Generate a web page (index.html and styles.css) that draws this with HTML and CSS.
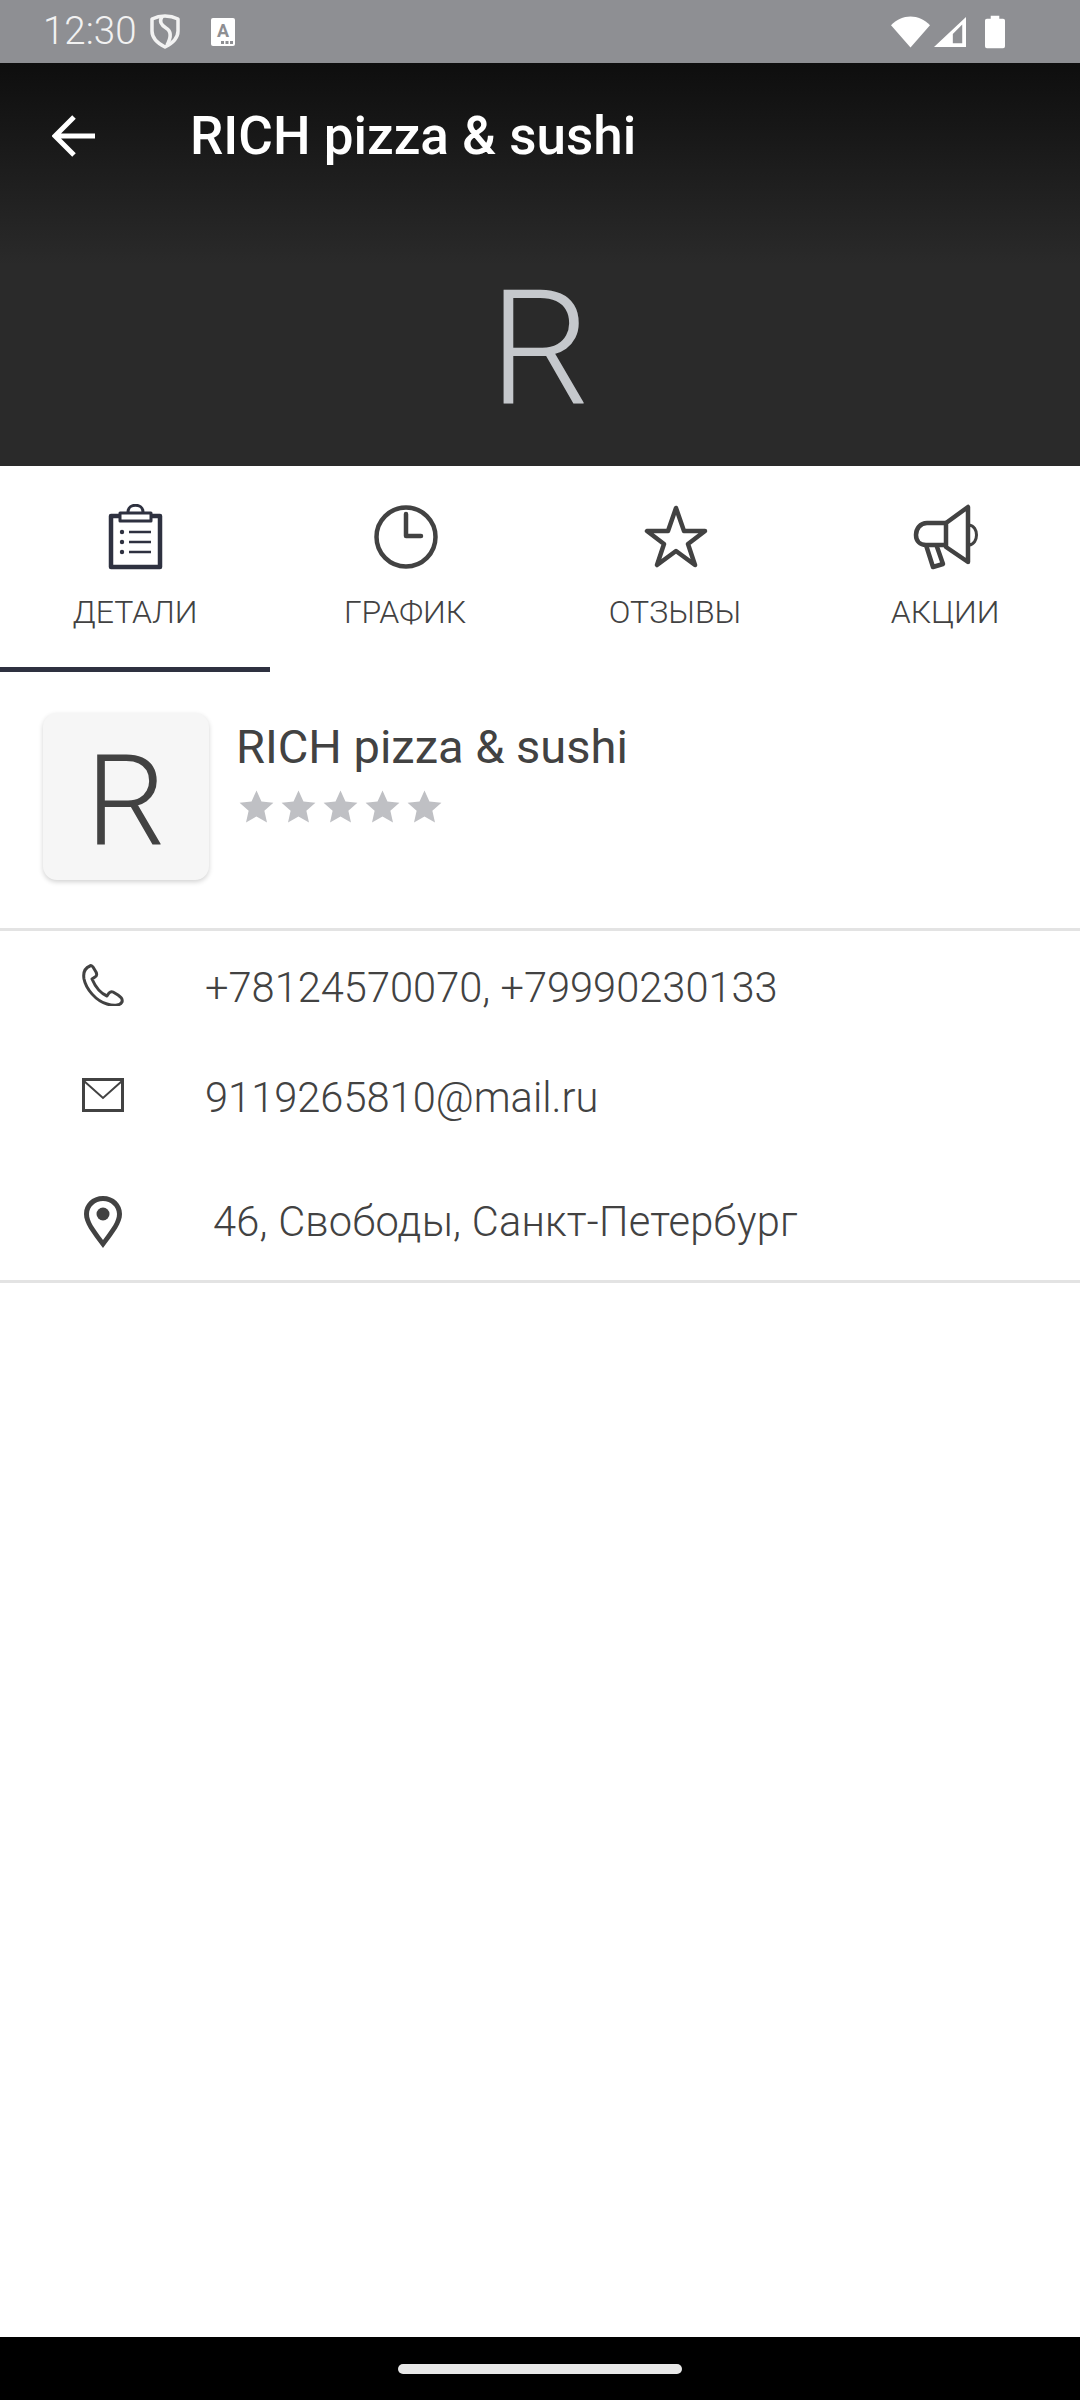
FILE: index.html
```html
<!doctype html>
<html lang="ru">
<head>
<meta charset="utf-8">
<meta name="viewport" content="width=device-width,initial-scale=1">
<title>RICH pizza &amp; sushi</title>
<link rel="stylesheet" href="styles.css">
</head>
<body>

<div class="status">
  <span class="time">12:30</span>
  <svg class="st-shield" viewBox="0 0 30 35"><path d="M15 2c4 0 9 1 13 3v12c0 7-5 12-13 16C7 29 2 24 2 17V5c4-2 9-3 13-3z" fill="none" stroke="#f2f2f2" stroke-width="3.500" stroke-linejoin="round"/><path d="M12 3c-3 4-1 8 4 11 5 3 6 8 1 17" fill="none" stroke="#f2f2f2" stroke-width="3.500"/></svg>
  <div class="st-a"><span>A</span><svg viewBox="0 0 12 3"><path d="M0 0h3v3H0zM4.500 0h3v3h-3zM9 0h3v3H9z" fill="#8e8f93"/></svg></div>
  <div class="st-right">
    <svg class="st-wifi" viewBox="0 0 40 32"><path d="M0 9C11-3 29-3 40 9L20 32z" fill="#fff"/></svg>
    <svg class="st-signal" viewBox="0 0 34 32"><path fill-rule="evenodd" d="M34 0v32H0zM30 8L20 18v10h10z" fill="#fff"/></svg>
    <svg class="st-batt" viewBox="0 0 21 34"><path d="M6 0h9v3h4a2 2 0 0 1 2 2v27a2 2 0 0 1-2 2H2a2 2 0 0 1-2-2V5a2 2 0 0 1 2-2h4z" fill="#fff"/></svg>
  </div>
</div>

<header class="hero">
  <div class="topbar">
    <svg class="back" viewBox="0 0 44 42"><path d="M43 21H4M22 2L3 21l19 19" fill="none" stroke="#fff" stroke-width="5"/></svg>
    <h1>RICH pizza &amp; sushi</h1>
  </div>
  <div class="hero-letter">R</div>
</header>

<nav class="tabs">
  <div class="tab active">
    <svg viewBox="0 0 68 68"><g fill="none" stroke="#2e3140" stroke-linejoin="round"><rect x="10" y="12" width="49" height="51" stroke-width="4.500"/><rect x="19" y="9" width="31" height="8" fill="#fff" stroke-width="3"/><path d="M27 8c0-9 15-9 15 0" stroke-width="3"/><path d="M28 28h22M28 38h22M28 48h22" stroke-width="2.600"/></g><g fill="#2e3140"><circle cx="21" cy="28" r="2.200"/><circle cx="21" cy="38" r="2.200"/><circle cx="21" cy="48" r="2.200"/></g></svg>
    <span>ДЕТАЛИ</span>
  </div>
  <div class="tab">
    <svg viewBox="0 0 68 68"><circle cx="35" cy="33" r="29.500" fill="none" stroke="#424242" stroke-width="4.500"/><path d="M35 10v22h15" fill="none" stroke="#424242" stroke-width="4.500" stroke-linecap="round" stroke-linejoin="round"/></svg>
    <span>ГРАФИК</span>
  </div>
  <div class="tab">
    <svg viewBox="0 0 68 68"><path d="M35 4l8 23h21L47 40l7 21-19-14-19 14 7-21L6 27h21z" fill="none" stroke="#424242" stroke-width="4.500" stroke-linejoin="round"/></svg>
    <span>ОТЗЫВЫ</span>
  </div>
  <div class="tab">
    <svg viewBox="0 0 68 68"><g fill="none" stroke="#424242" stroke-width="4.500" stroke-linejoin="round"><path d="M35 19L57 3v55L35 43z"/><path d="M35 19H16C9 19 5 25 5 31s4 10 10 10h20"/><path d="M15 41l7 22 10-3-7-20"/><path d="M58 21c10 1 10 19 0 20" stroke-width="3"/></g></svg>
    <span>АКЦИИ</span>
  </div>
</nav>

<main class="content">
  <section class="info">
    <div class="logo">R</div>
    <div class="info-text">
      <h2>RICH pizza &amp; sushi</h2>
      <div class="stars">
        <svg viewBox="0 0 24 24"><path d="M12 1l3.400 7.600 8.200.8-6.200 5.500 1.800 8.100-7.200-4.200L4.800 23l1.800-8.100L.4 9.400l8.200-.8z"/></svg>
        <svg viewBox="0 0 24 24"><path d="M12 1l3.400 7.600 8.200.8-6.200 5.500 1.800 8.100-7.200-4.200L4.800 23l1.800-8.100L.4 9.400l8.200-.8z"/></svg>
        <svg viewBox="0 0 24 24"><path d="M12 1l3.400 7.600 8.200.8-6.200 5.500 1.800 8.100-7.200-4.200L4.800 23l1.800-8.100L.4 9.400l8.200-.8z"/></svg>
        <svg viewBox="0 0 24 24"><path d="M12 1l3.400 7.600 8.200.8-6.200 5.500 1.800 8.100-7.200-4.200L4.800 23l1.800-8.100L.4 9.400l8.200-.8z"/></svg>
        <svg viewBox="0 0 24 24"><path d="M12 1l3.400 7.600 8.200.8-6.200 5.500 1.800 8.100-7.200-4.200L4.800 23l1.800-8.100L.4 9.400l8.200-.8z"/></svg>
      </div>
    </div>
  </section>

  <section class="contacts">
    <div class="row row-phone">
      <svg viewBox="0 0 42 42"><path d="M8 2C3 4 1 9 2 15c2 10 12 22 23 25 6 2 13 2 15-2 1-3-1-5-4-7l-5-3c-2-1-3 0-4 1l-2 3c-7-3-12-10-15-17l3-2c2-1 2-3 1-5l-3-5C10 2 9 1 8 2z" fill="none" stroke="#424242" stroke-width="3" stroke-linejoin="round"/></svg>
      <span>+78124570070, +79990230133</span>
    </div>
    <div class="row row-mail">
      <svg viewBox="0 0 42 34"><rect x="1.500" y="1.500" width="39" height="31" fill="none" stroke="#424242" stroke-width="3"/><path d="M2 3l19 17L40 3" fill="none" stroke="#424242" stroke-width="2"/></svg>
      <span>9119265810@mail.ru</span>
    </div>
    <div class="row row-addr">
      <svg viewBox="0 0 38 52"><path fill-rule="evenodd" d="M19 0c11 0 19 8 19 18 0 9-7 18-19 34C7 36 0 27 0 18 0 8 8 0 19 0zm0 5C11 5 5 11 5 18c0 7 5 14 14 26 9-12 14-19 14-26 0-7-6-13-14-13z" fill="#424242"/><circle cx="19" cy="18" r="6.500" fill="#424242"/></svg>
      <span>46, Свободы, Санкт-Петербург</span>
    </div>
  </section>
</main>

<div class="navbar"><div class="pill"></div></div>

</body>
</html>
```

FILE: styles.css
```css
*{box-sizing:border-box;margin:0;padding:0}
body{
  font-family:Roboto,sans-serif;background:#fff;color:#424242;
  width:1080px;height:2400px;display:flex;flex-direction:column;overflow:hidden;
}

/* status bar */
.status{
  height:63px;background:#8e8f93;display:flex;align-items:center;
  padding:0 75px 0 43px;color:#f2f2f2;
}
.time{font-size:38.5px;font-weight:300;line-height:1;width:107px}
.st-shield{width:30px;height:35px}
.st-a{
  width:24px;height:28px;margin-left:31px;padding:5px 2px 2px;background:#fff;border-radius:2px;
  display:flex;flex-direction:column;align-items:center;justify-content:space-between;
}
.st-a span{font-size:18px;font-weight:700;color:#8e8f93;line-height:15px}
.st-a svg{width:12px;height:3px;align-self:flex-end}
.st-right{margin-left:auto;display:flex;align-items:center}
.st-wifi{width:39px;height:32px}
.st-signal{width:32px;height:32px;margin-left:4px}
.st-batt{width:20px;height:34px;margin-left:19px}

/* dark header */
.hero{
  height:403px;background:linear-gradient(#0e0e0e,#2a2a2a 50%);
  display:flex;flex-direction:column;
}
.topbar{height:146px;display:flex;align-items:center;padding:0 0 0 52px}
.back{width:44px;height:42px}
.topbar h1{font-size:53px;font-weight:500;color:#fff;margin-left:94px;line-height:1}
.hero-letter{
  font-size:159px;font-weight:300;color:#c5c8cc;text-align:center;line-height:1;
  margin-top:60px;
}

/* tabs */
.tabs{display:grid;grid-template-columns:repeat(4,1fr);height:206px}
.tab{display:flex;flex-direction:column;align-items:center;padding-top:38px}
.tab svg{width:68px;height:68px}
.tab span{font-size:32px;font-weight:300;line-height:1;margin-top:24px}
.tab.active{border-bottom:5px solid #2e3140}

.content{flex:1}

/* name + logo */
.info{
  display:flex;height:259px;padding:41px 0 0 43px;
  border-bottom:3px solid #e3e3e3;
}
.logo{
  width:166px;height:167px;background:#f6f6f6;border-radius:14px;
  box-shadow:0 2px 5px rgba(0,0,0,.18);padding-top:9px;
  display:flex;align-items:center;justify-content:center;
  font-size:126px;font-weight:300;line-height:1;
}
.info-text{margin-left:27px}
.info-text h2{font-size:47px;font-weight:400;line-height:1;margin-top:10px}
.stars{display:flex;gap:7px;margin-top:19px;padding-left:3px}
.stars svg{width:35px;height:35px;fill:#bfc0c4}

/* phone, mail, address */
.contacts{border-bottom:3px solid #e3e3e3;height:352px}
.row{display:flex;align-items:center;font-size:41.6px;font-weight:300;line-height:1}
.row svg{flex:none}
.row-phone{height:113px}
.row-phone svg{width:42px;height:42px;margin:-6px 81px 0 82px}
.row-mail{height:107px}
.row-mail svg{width:42px;height:34px;margin:-5px 81px 0 82px}
.row-addr{height:130px;padding-top:12px}
.row-addr svg{width:38px;height:52px;margin:0 91px 0 84px}
.row-addr span{letter-spacing:.22px}

/* android nav */
.navbar{height:63px;background:#000;display:flex;align-items:center;justify-content:center}
.pill{width:284px;height:10px;background:#e8e8e8;border-radius:5px}
```
